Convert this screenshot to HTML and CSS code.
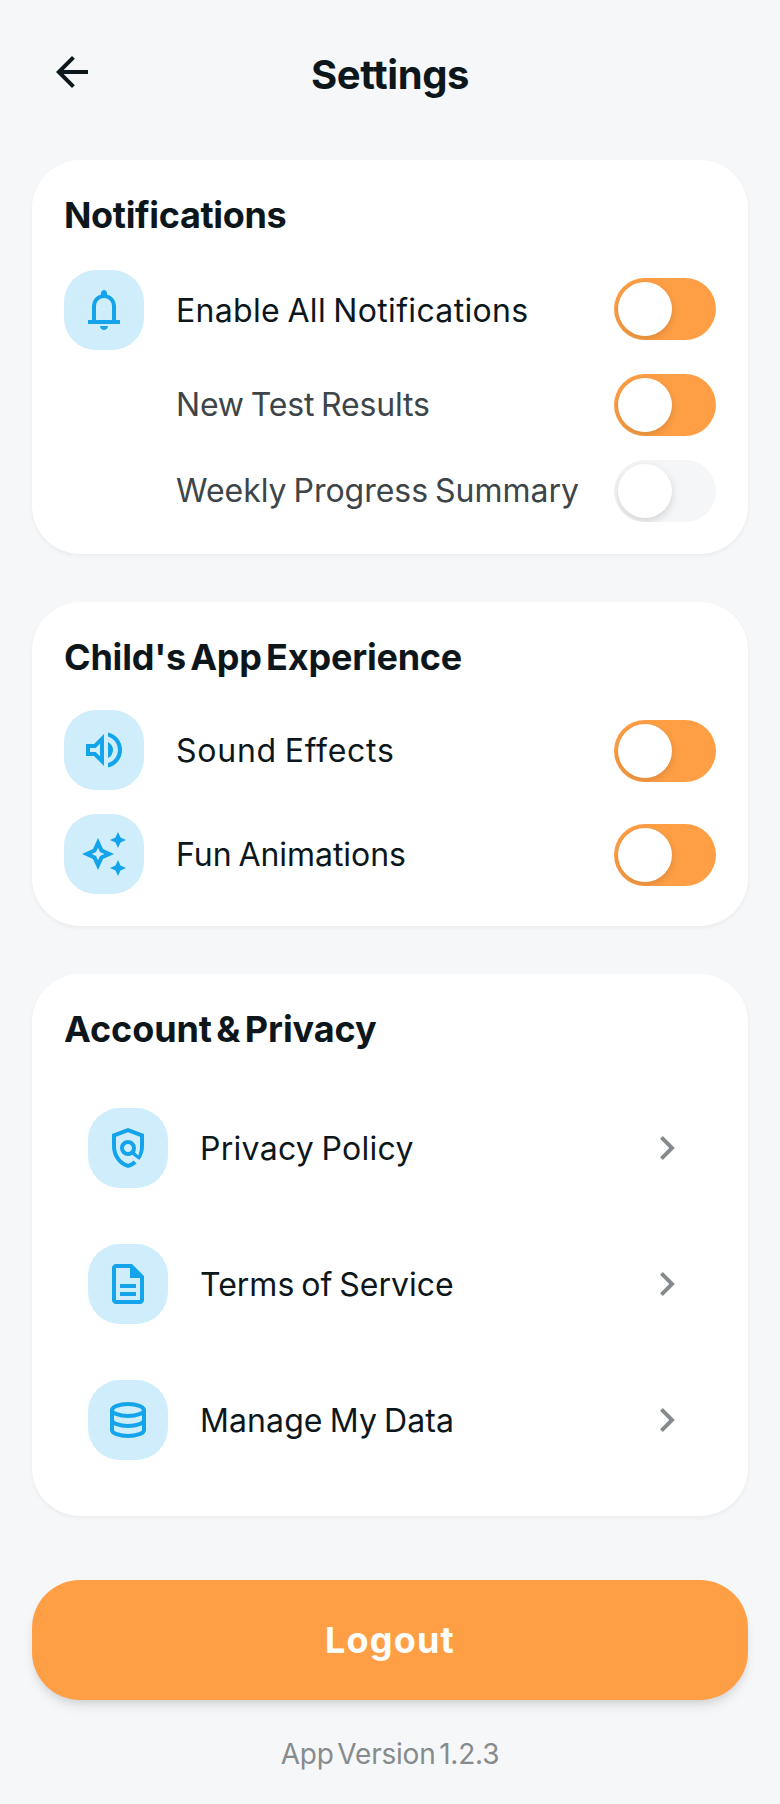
FILE: index.html
```html
<!DOCTYPE html>
<html lang="en">
<head>
<meta charset="utf-8">
<title>Settings</title>
<link rel="stylesheet" href="styles.css">
</head>
<body>
<header class="header">
  <svg class="icon" viewBox="0 0 24 24"><path d="m7.825 13 5.6 5.6L12 20l-8-8 8-8 1.425 1.4-5.6 5.6H20v2z"/></svg>
  <h1 class="title">Settings</h1>
</header>
<main class="main">
  <section class="card card-notifications">
    <h2 class="heading">Notifications</h2>
    <div class="rows">
      <div class="row">
        <span class="badge"><svg class="icon" viewBox="0 0 24 24"><path d="M4 19v-2h2v-7q0-2.075 1.25-3.687T10.5 4.2v-.7q0-.625.438-1.062T12 2t1.063.438T13.5 3.5v.7q2 .5 3.25 2.113T18 10v7h2v2zm8 3q-.825 0-1.412-.587T10 20h4q0 .825-.587 1.413T12 22m-4-5h8v-7q0-1.65-1.175-2.825T12 6 9.175 7.175 8 10z"/></svg></span>
        <span class="label label-enable">Enable All Notifications</span>
        <span class="toggle on"><span class="knob"></span></span>
      </div>
      <div class="row sub">
        <span class="label label-results">New Test Results</span>
        <span class="toggle on"><span class="knob"></span></span>
      </div>
      <div class="row sub">
        <span class="label label-weekly">Weekly Progress Summary</span>
        <span class="toggle"><span class="knob"></span></span>
      </div>
    </div>
  </section>
  <section class="card card-experience">
    <h2 class="heading heading-experience">Child's App Experience</h2>
    <div class="rows">
      <div class="row">
        <span class="badge"><svg class="icon" viewBox="0 0 24 24"><path d="M14 20.725v-2.05q2.25-.65 3.625-2.5t1.375-4.2-1.375-4.2T14 5.275v-2.05q3.1.7 5.05 3.137T21 11.975t-1.95 5.613T14 20.725M3 15V9h4l5-5v16l-5-5zm11 1V7.95q1.175.55 1.838 1.65T16.5 12q0 1.275-.662 2.363T14 16m-4-7.15L7.85 11H5v2h2.85L10 15.15z"/></svg></span>
        <span class="label label-sound">Sound Effects</span>
        <span class="toggle on"><span class="knob"></span></span>
      </div>
      <div class="row">
        <span class="badge"><svg class="icon" viewBox="0 0 24 24"><path d="m19 9 1.25-2.75L23 5l-2.75-1.25L19 1l-1.25 2.75L15 5l2.75 1.25L19 9zm0 6-1.25 2.75L15 19l2.75 1.25L19 23l1.25-2.75L23 19l-2.75-1.25L19 15zm-7.5-5.5L9 4 6.5 9.5 1 12l5.5 2.5L9 20l2.5-5.5L17 12l-5.5-2.5zm-1.51 3.49L9 15.17l-.99-2.18L5.83 12l2.18-.99L9 8.83l.99 2.18 2.18.99-2.18.99z"/></svg></span>
        <span class="label label-fun">Fun Animations</span>
        <span class="toggle on"><span class="knob"></span></span>
      </div>
    </div>
  </section>
  <section class="card card-account">
    <h2 class="heading heading-account">Account &amp; Privacy</h2>
    <div class="links">
      <a class="row link">
        <span class="badge"><svg class="icon" viewBox="0 0 24 24"><path d="M12 22q-3.475-.875-5.737-3.988T4 11.1V5l8-3 8 3v6.1q0 1.9-.6 3.65t-1.75 3.3L14.1 15.4q-.475.3-1.012.45T12 16q-1.65 0-2.825-1.175T8 12t1.175-2.825T12 8t2.825 1.175T16 12q0 .55-.137 1.075T15.45 14.1l1.65 1.65q.425-.975.663-2.138T18 11.1V6.375l-6-2.25-6 2.25V11.1q0 3.025 1.7 5.5t4.3 3.3q.775-.25 1.5-.65T14.85 18.25l1.45 1.45q-.9.85-1.988 1.425T12 22m0-8q.825 0 1.413-.587T14 12t-.587-1.412T12 10t-1.412.588T10 12t.588 1.413T12 14"/></svg></span>
        <span class="label label-privacy">Privacy Policy</span>
        <svg class="icon chevron" viewBox="0 0 24 24"><path d="M12.6 12 8 7.4 9.4 6l6 6-6 6L8 16.6z"/></svg>
      </a>
      <a class="row link">
        <span class="badge"><svg class="icon" viewBox="0 0 24 24"><path d="M8 18h8v-2H8zm0-4h8v-2H8zm-2 8q-.825 0-1.412-.587T4 20V4q0-.825.588-1.412T6 2h8l6 6v12q0 .825-.587 1.413T18 22zm7-13V4H6v16h12V9z"/></svg></span>
        <span class="label label-terms">Terms of Service</span>
        <svg class="icon chevron" viewBox="0 0 24 24"><path d="M12.6 12 8 7.4 9.4 6l6 6-6 6L8 16.6z"/></svg>
      </a>
      <a class="row link">
        <span class="badge"><svg class="icon outline" viewBox="0 0 24 24"><ellipse cx="12" cy="7" rx="8" ry="3"/><path d="M4 7v10c0 1.66 3.58 3 8 3s8-1.34 8-3V7M4 12c0 1.66 3.58 3 8 3s8-1.34 8-3"/></svg></span>
        <span class="label label-data">Manage My Data</span>
        <svg class="icon chevron" viewBox="0 0 24 24"><path d="M12.6 12 8 7.4 9.4 6l6 6-6 6L8 16.6z"/></svg>
      </a>
    </div>
  </section>
</main>
<footer class="footer">
  <button class="logout">Logout</button>
  <p class="version">App Version 1.2.3</p>
</footer>
</body>
</html>
```
FILE: styles.css
```css
* { box-sizing: border-box; }
body {
  margin: 0;
  min-height: 1804px;
  background: #f6f7f9;
  color: #0d171b;
  font-family: Inter, "Liberation Sans", sans-serif;
}
.icon { width: 48px; height: 48px; display: block; fill: currentColor; flex: none; }
.outline { fill: none; stroke: currentColor; stroke-width: 2; }
.header {
  display: grid;
  grid-template-columns: 48px 1fr 48px;
  height: 160px;
  padding: 48px 48px 0;
}
.title {
  margin: 0;
  text-align: center;
  font-size: 40px;
  line-height: 54px;
  font-weight: 700;
  letter-spacing: -0.4px;
}
.main { display: flex; flex-direction: column; gap: 48px; padding: 0 32px; }
.card {
  padding: 32px;
  border-radius: 48px;
  background: #fff;
  box-shadow: 0 2px 4px rgba(0, 0, 0, 0.05);
}
.heading {
  margin: 0 0 32px;
  font-size: 36px;
  line-height: 46px;
  font-weight: 700;
  letter-spacing: -0.35px;
  word-spacing: -4px;
}
.heading-experience { margin-bottom: 30px; letter-spacing: -0.21px; }
.heading-account { letter-spacing: -0.09px; }
.rows { display: flex; flex-direction: column; gap: 24px; }
.row { display: flex; align-items: center; gap: 32px; }
.badge {
  display: grid;
  place-items: center;
  flex: none;
  width: 80px;
  height: 80px;
  border-radius: 32px;
  background: #d0edfb;
  color: #13a4ec;
}
.label {
  flex: 1;
  padding-top: 2px;
  font-size: 32px;
  line-height: 48px;
  white-space: nowrap;
  word-spacing: -2px;
}
.label-enable { letter-spacing: 0.33px; }
.label-results { letter-spacing: -0.16px; }
.label-weekly { letter-spacing: -0.02px; }
.label-sound { letter-spacing: 0.75px; }
.label-fun { letter-spacing: -0.05px; }
.label-privacy { letter-spacing: 0.28px; }
.label-terms { letter-spacing: 0; }
.label-data { letter-spacing: 0.1px; }
.sub { padding-left: 112px; color: #3d4549; }
.sub .label { padding-top: 0; }
.toggle {
  flex: none;
  width: 102px;
  height: 62px;
  padding: 4px;
  border-radius: 31px;
  background: #f5f6f8;
  overflow: hidden;
}
.toggle.on { background: #ff9f45; }
.card-notifications .badge ~ .toggle { margin-bottom: 2px; }
.card-experience .toggle { margin-top: 2px; }
.knob {
  display: block;
  width: 54px;
  height: 54px;
  border-radius: 50%;
  background: #fff;
  box-shadow: 0 3px 8px rgba(0, 0, 0, 0.15);
}
.links { display: flex; flex-direction: column; gap: 8px; }
.link { padding: 24px; }
.chevron { color: #868b8d; }
.footer { padding: 64px 32px 32px; }
.logout {
  display: block;
  width: 100%;
  height: 120px;
  border: 0;
  border-radius: 48px;
  background: #ff9f45;
  color: #fff;
  font: 700 36px/56px Inter, "Liberation Sans", sans-serif;
  letter-spacing: 1.17px;
  box-shadow: 0 8px 12px -2px rgba(0, 0, 0, 0.1), 0 4px 8px -4px rgba(0, 0, 0, 0.1);
}
.version {
  margin: 36px 0 0;
  text-align: center;
  color: #868b8d;
  font-size: 28px;
  line-height: 36px;
  letter-spacing: -0.21px;
  word-spacing: -4px;
}
```
